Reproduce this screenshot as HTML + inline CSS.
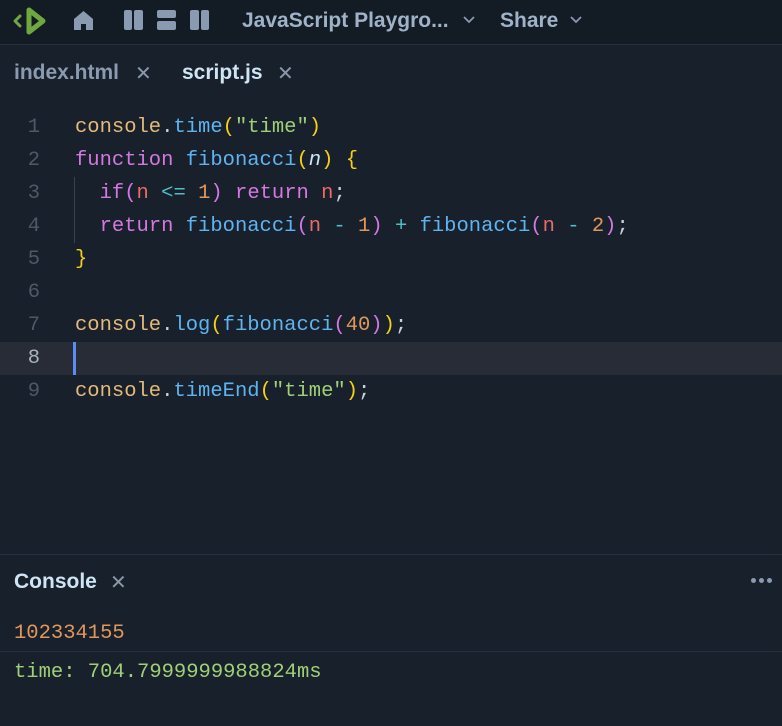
<!DOCTYPE html>
<html><head><meta charset="utf-8"><style>
*{margin:0;padding:0;box-sizing:border-box}
body{width:782px;height:726px;background:#18202b;overflow:hidden;font-family:"Liberation Sans",sans-serif;position:relative}
.top{position:absolute;left:0;top:0;width:782px;height:45px;background:#131b25;border-bottom:1px solid #253040}
.t{position:absolute;color:#9fb2c8;font-size:21px;font-weight:bold;top:9px}
.tab{position:absolute;top:61px;font-size:21px;font-weight:bold}
.x{position:absolute;color:#8a97a8;font-size:20px}
.code{position:absolute;top:111px;left:0;font-family:"Liberation Mono",monospace;font-size:20.5px;line-height:33px}
.ln{position:absolute;left:0;width:40px;text-align:right;color:#4e5868}
.cl{position:absolute;left:75px;white-space:pre;color:#c8d0da}
.o{color:#e5b97a}.b{color:#5fb3f0}.y{color:#f5d018}.g{color:#9fcf78}.p{color:#d278e0}.r{color:#ea6a6a}.n{color:#e0975c}.c{color:#4ec0c8}.w{color:#c8d0da}
</style></head><body>
<div class="top">
<svg style="position:absolute;left:13px;top:6px" width="34" height="30" viewBox="0 0 34 30"><path d="M7 10 L2 15 L7 20" fill="none" stroke="#6fa83e" stroke-width="3" stroke-linecap="round" stroke-linejoin="round"/><path d="M16 4 L30 15 L16 26 Z" fill="none" stroke="#6fa83e" stroke-width="5" stroke-linejoin="round"/></svg>
<svg style="position:absolute;left:73px;top:10px" width="21" height="21" viewBox="0 0 21 21"><path d="M1 9 L10.5 1 L20 9 V20 H13 V14 H8 V20 H1 Z" fill="#8a9ab0"/></svg>
<div style="position:absolute;left:124px;top:10px;width:8px;height:20px;background:#8a9ab0;border-radius:2px"></div>
<div style="position:absolute;left:134px;top:10px;width:9px;height:20px;background:#8a9ab0;border-radius:2px"></div>
<div style="position:absolute;left:157px;top:10px;width:19px;height:8px;background:#8a9ab0;border-radius:2px"></div>
<div style="position:absolute;left:157px;top:21px;width:19px;height:9px;background:#8a9ab0;border-radius:2px"></div>
<div style="position:absolute;left:190px;top:10px;width:9px;height:20px;background:#8a9ab0;border-radius:2px"></div>
<div style="position:absolute;left:201px;top:10px;width:8px;height:20px;background:#8a9ab0;border-radius:2px"></div>
<div class="t" style="left:242px">JavaScript Playgro...</div>
<svg style="position:absolute;left:463px;top:16px" width="12" height="8"><path d="M1 1 L6 6 L11 1" fill="none" stroke="#8a9ab0" stroke-width="1.8"/></svg>
<div class="t" style="left:500px">Share</div>
<svg style="position:absolute;left:570px;top:16px" width="12" height="8"><path d="M1 1 L6 6 L11 1" fill="none" stroke="#8a9ab0" stroke-width="1.8"/></svg>
</div>
<div class="tab" style="left:14px;color:#8a9ab0">index.html</div>
<div class="x" style="left:135px;top:61px">✕</div>
<div class="tab" style="left:182px;color:#cfe4f4">script.js</div>
<div class="x" style="left:277px;top:61px">✕</div>
<div style="position:absolute;left:0;top:342px;width:782px;height:33px;background:#272c37"></div>
<div style="position:absolute;left:73px;top:342px;width:3px;height:33px;background:#5b8cf0"></div>
<div style="position:absolute;left:74px;top:177px;width:1px;height:66px;background:#3a4250"></div>
<div class="code">
<div class="ln" style="top:0">1</div><div class="ln" style="top:33px">2</div><div class="ln" style="top:66px">3</div><div class="ln" style="top:99px">4</div><div class="ln" style="top:132px">5</div><div class="ln" style="top:165px">6</div><div class="ln" style="top:198px">7</div><div class="ln" style="top:231px;color:#a8b2c0">8</div><div class="ln" style="top:264px">9</div>
<div class="cl" style="top:0"><span class="o">console</span><span class="w">.</span><span class="b">time</span><span class="y">(</span><span class="g">"time"</span><span class="y">)</span></div>
<div class="cl" style="top:33px"><span class="p">function</span> <span class="b">fibonacci</span><span class="y">(</span><i class="b" style="color:#cfe4f4">n</i><span class="y">)</span> <span class="y">{</span></div>
<div class="cl" style="top:66px">  <span class="p">if</span><span class="p">(</span><span class="r">n</span> <span class="c">&lt;=</span> <span class="n">1</span><span class="p">)</span> <span class="p">return</span> <span class="r">n</span><span class="w">;</span></div>
<div class="cl" style="top:99px">  <span class="p">return</span> <span class="b">fibonacci</span><span class="p">(</span><span class="r">n</span> <span class="c">-</span> <span class="n">1</span><span class="p">)</span> <span class="c">+</span> <span class="b">fibonacci</span><span class="p">(</span><span class="r">n</span> <span class="c">-</span> <span class="n">2</span><span class="p">)</span><span class="w">;</span></div>
<div class="cl" style="top:132px"><span class="y">}</span></div>
<div class="cl" style="top:198px"><span class="o">console</span><span class="w">.</span><span class="b">log</span><span class="y">(</span><span class="b">fibonacci</span><span class="p">(</span><span class="n">40</span><span class="p">)</span><span class="y">)</span><span class="w">;</span></div>
<div class="cl" style="top:264px"><span class="o">console</span><span class="w">.</span><span class="b">timeEnd</span><span class="y">(</span><span class="g">"time"</span><span class="y">)</span><span class="w">;</span></div>
</div>
<div style="position:absolute;left:0;top:554px;width:782px;height:1px;background:#253040"></div>
<div class="tab" style="left:14px;top:570px;color:#cfe4f4">Console</div>
<div class="x" style="left:110px;top:570px">✕</div>
<div style="position:absolute;left:751px;top:578px;width:5px;height:5px;border-radius:50%;background:#8a9ab0"></div>
<div style="position:absolute;left:759px;top:578px;width:5px;height:5px;border-radius:50%;background:#8a9ab0"></div>
<div style="position:absolute;left:767px;top:578px;width:5px;height:5px;border-radius:50%;background:#8a9ab0"></div>
<div style="position:absolute;left:14px;top:622px;font-family:'Liberation Mono',monospace;font-size:20.5px;color:#e0975c">102334155</div>
<div style="position:absolute;left:0;top:651px;width:782px;height:1px;background:#253040"></div>
<div style="position:absolute;left:14px;top:661px;font-family:'Liberation Mono',monospace;font-size:20.5px;color:#9fcf78">time: 704.7999999988824ms</div>
</body></html>
